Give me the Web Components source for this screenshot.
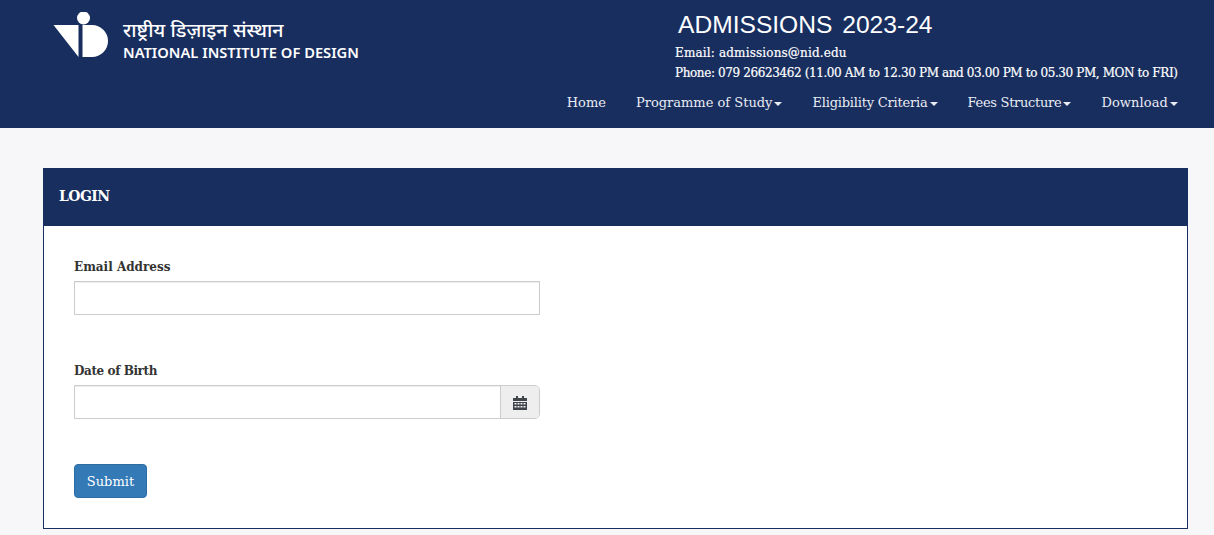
<!DOCTYPE html>
<html lang="en">
<head>
<meta charset="utf-8">
<title>NID Admissions 2023-24</title>
<style>
  html, body { margin: 0; padding: 0; background: #f7f7f9; }
  body { font-family: "Roboto Slab", "DejaVu Serif", serif; }
</style>
</head>
<body>
<nid-header>
  <nid-nav-item>Home</nid-nav-item>
  <nid-nav-item caret>Programme of Study</nid-nav-item>
  <nid-nav-item caret style="letter-spacing:-.2px">Eligibility Criteria</nid-nav-item>
  <nid-nav-item caret style="letter-spacing:-.3px">Fees Structure</nid-nav-item>
  <nid-nav-item caret style="letter-spacing:.1px">Download</nid-nav-item>
</nid-header>
<nid-card title="LOGIN">
  <nid-field label="Email Address"></nid-field>
  <nid-field label="Date of Birth" calendar style="letter-spacing:-.4px"></nid-field>
  <nid-button>Submit</nid-button>
</nid-card>
<script>
class NidHeader extends HTMLElement {
    constructor() {
        super();
        this.attachShadow({ mode: 'open' });
    }

    connectedCallback() {
        this.shadowRoot.innerHTML = `
            <style>
                :host { display: block; background: #182e5f; color: #fff; height: 128px; }
                .wrap { display: flex; justify-content: space-between; height: 100%; padding: 0 36px 0 53px; }
                .brand { display: flex; gap: 15px; align-items: flex-start; padding-top: 12px; }
                .brand svg { display: block; }
                .names { display: flex; flex-direction: column; margin-top: 6px; }
                .hi { font: 500 19.6px/25px "Liberation Sans", "Noto Sans", sans-serif; }
                .en { font: 600 14.7px/17px "Noto Sans", sans-serif; margin-top: 1px; }
                .side { display: flex; flex-direction: column; width: 503px; }
                h1 { margin: 10px 0 0 3px; font: 400 24.6px/29px "Liberation Sans", sans-serif; word-spacing: 3px; }
                p { margin: 0; font-size: 12px; line-height: 20px; white-space: nowrap; -webkit-text-stroke: .2px #fff; }
                p.mail { margin-top: 4px; letter-spacing: .16px; }
                p.phone { letter-spacing: -.385px; }
                nav { display: flex; justify-content: flex-end; gap: 30px; margin-top: 10px; }
            </style>
            <div class="wrap">
                <div class="brand">
                    <svg width="55" height="46" viewBox="53 12 55 46" fill="#fff">
                        <circle cx="83.5" cy="18" r="6.5"/>
                        <path d="M53.5 25H78.5V57Z"/>
                        <path d="M82.5 25H92A16 16 0 0 1 92 57H82.5Z"/>
                    </svg>
                    <div class="names">
                        <span class="hi">राष्ट्रीय डिज़ाइन संस्थान</span>
                        <span class="en">NATIONAL INSTITUTE OF DESIGN</span>
                    </div>
                </div>
                <div class="side">
                    <h1>ADMISSIONS 2023-24</h1>
                    <p class="mail">Email: admissions@nid.edu</p>
                    <p class="phone">Phone: 079 26623462 (11.00 AM to 12.30 PM and 03.00 PM to 05.30 PM, MON to FRI)</p>
                    <nav><slot></slot></nav>
                </div>
            </div>
        `;
    }
}

class NidNavItem extends HTMLElement {
    constructor() {
        super();
        this.attachShadow({ mode: 'open' });
    }

    connectedCallback() {
        const caret = this.hasAttribute('caret') ? '<i></i>' : '';
        this.shadowRoot.innerHTML = `
            <style>
                :host { display: block; font-size: 13px; line-height: 20px; color: #e9ecf4; white-space: nowrap; }
                i { display: inline-block; margin-left: 2px; vertical-align: middle; border-top: 4px solid; border-left: 4px solid transparent; border-right: 4px solid transparent; }
            </style>
            <slot></slot>${caret}
        `;
    }
}

class NidCard extends HTMLElement {
    constructor() {
        super();
        this.attachShadow({ mode: 'open' });
    }

    connectedCallback() {
        this.shadowRoot.innerHTML = `
            <style>
                :host { display: block; margin: 40px 26px 0 43px; background: #fff; border: 1px solid #182e5f; }
                header { background: #182e5f; color: #fff; font-size: 14px; font-weight: 700; letter-spacing: -.55px; line-height: 20px; padding: 17px 15px 20px; }
                .body { display: flex; flex-direction: column; align-items: flex-start; padding: 31px 30px 30px; }
            </style>
            <header>${this.getAttribute('title')}</header>
            <div class="body"><slot></slot></div>
        `;
    }
}

class NidField extends HTMLElement {
    constructor() {
        super();
        this.attachShadow({ mode: 'open' });
    }

    connectedCallback() {
        const addon = this.hasAttribute('calendar') ? `
            <span class="addon">
                <svg width="14" height="14" viewBox="0 0 14 14" fill="#3f434a">
                    <path d="M3 0h2v2H9V0h2v2h3v3H0V2h3Z"/>
                    <path fill-rule="evenodd" d="M0 6h14v8H0ZM1.5 7v1.5h2V7Zm3 0v1.5h2V7Zm3 0v1.5h2V7Zm3 0v1.5h2V7ZM1.5 10v1.5h2V10Zm3 0v1.5h2V10Zm3 0v1.5h2V10Zm3 0v1.5h2V10Z"/>
                </svg>
            </span>` : '';
        this.shadowRoot.innerHTML = `
            <style>
                :host { display: block; width: 466px; margin-bottom: 46px; }
                :host([calendar]) { margin-bottom: 45px; }
                label { display: block; font-size: 12px; font-weight: 700; line-height: 18px; color: #333; padding-top: 1px; margin-bottom: 5px; }
                .group { display: flex; height: 34px; box-sizing: border-box; border: 1px solid #ccc; background: #fff; box-shadow: inset 0 1px 1px rgba(0,0,0,.075); }
                :host([calendar]) .group { border-radius: 0 5px 5px 0; }
                input { flex: 1; min-width: 0; border: 0; padding: 6px 12px; background: transparent; outline: 0; }
                .addon { display: flex; align-items: center; justify-content: center; width: 38px; background: #eee; border-left: 1px solid #ccc; border-radius: 0 4px 4px 0; }
                .addon svg { margin: 1px 1px 0 0; }
            </style>
            <label>${this.getAttribute('label')}</label>
            <div class="group"><input type="text">${addon}</div>
        `;
    }
}

class NidButton extends HTMLElement {
    constructor() {
        super();
        this.attachShadow({ mode: 'open' });
    }

    connectedCallback() {
        this.shadowRoot.innerHTML = `
            <style>
                :host { display: block; }
                button { display: block; width: 73px; height: 34px; padding: 0; border: 1px solid #2e6da4; border-radius: 4px; background: #337ab7; color: #fff; font: inherit; font-size: 13px; }
            </style>
            <button><slot></slot></button>
        `;
    }
}

customElements.define('nid-header', NidHeader);
customElements.define('nid-nav-item', NidNavItem);
customElements.define('nid-card', NidCard);
customElements.define('nid-field', NidField);
customElements.define('nid-button', NidButton);
</script>
</body>
</html>
